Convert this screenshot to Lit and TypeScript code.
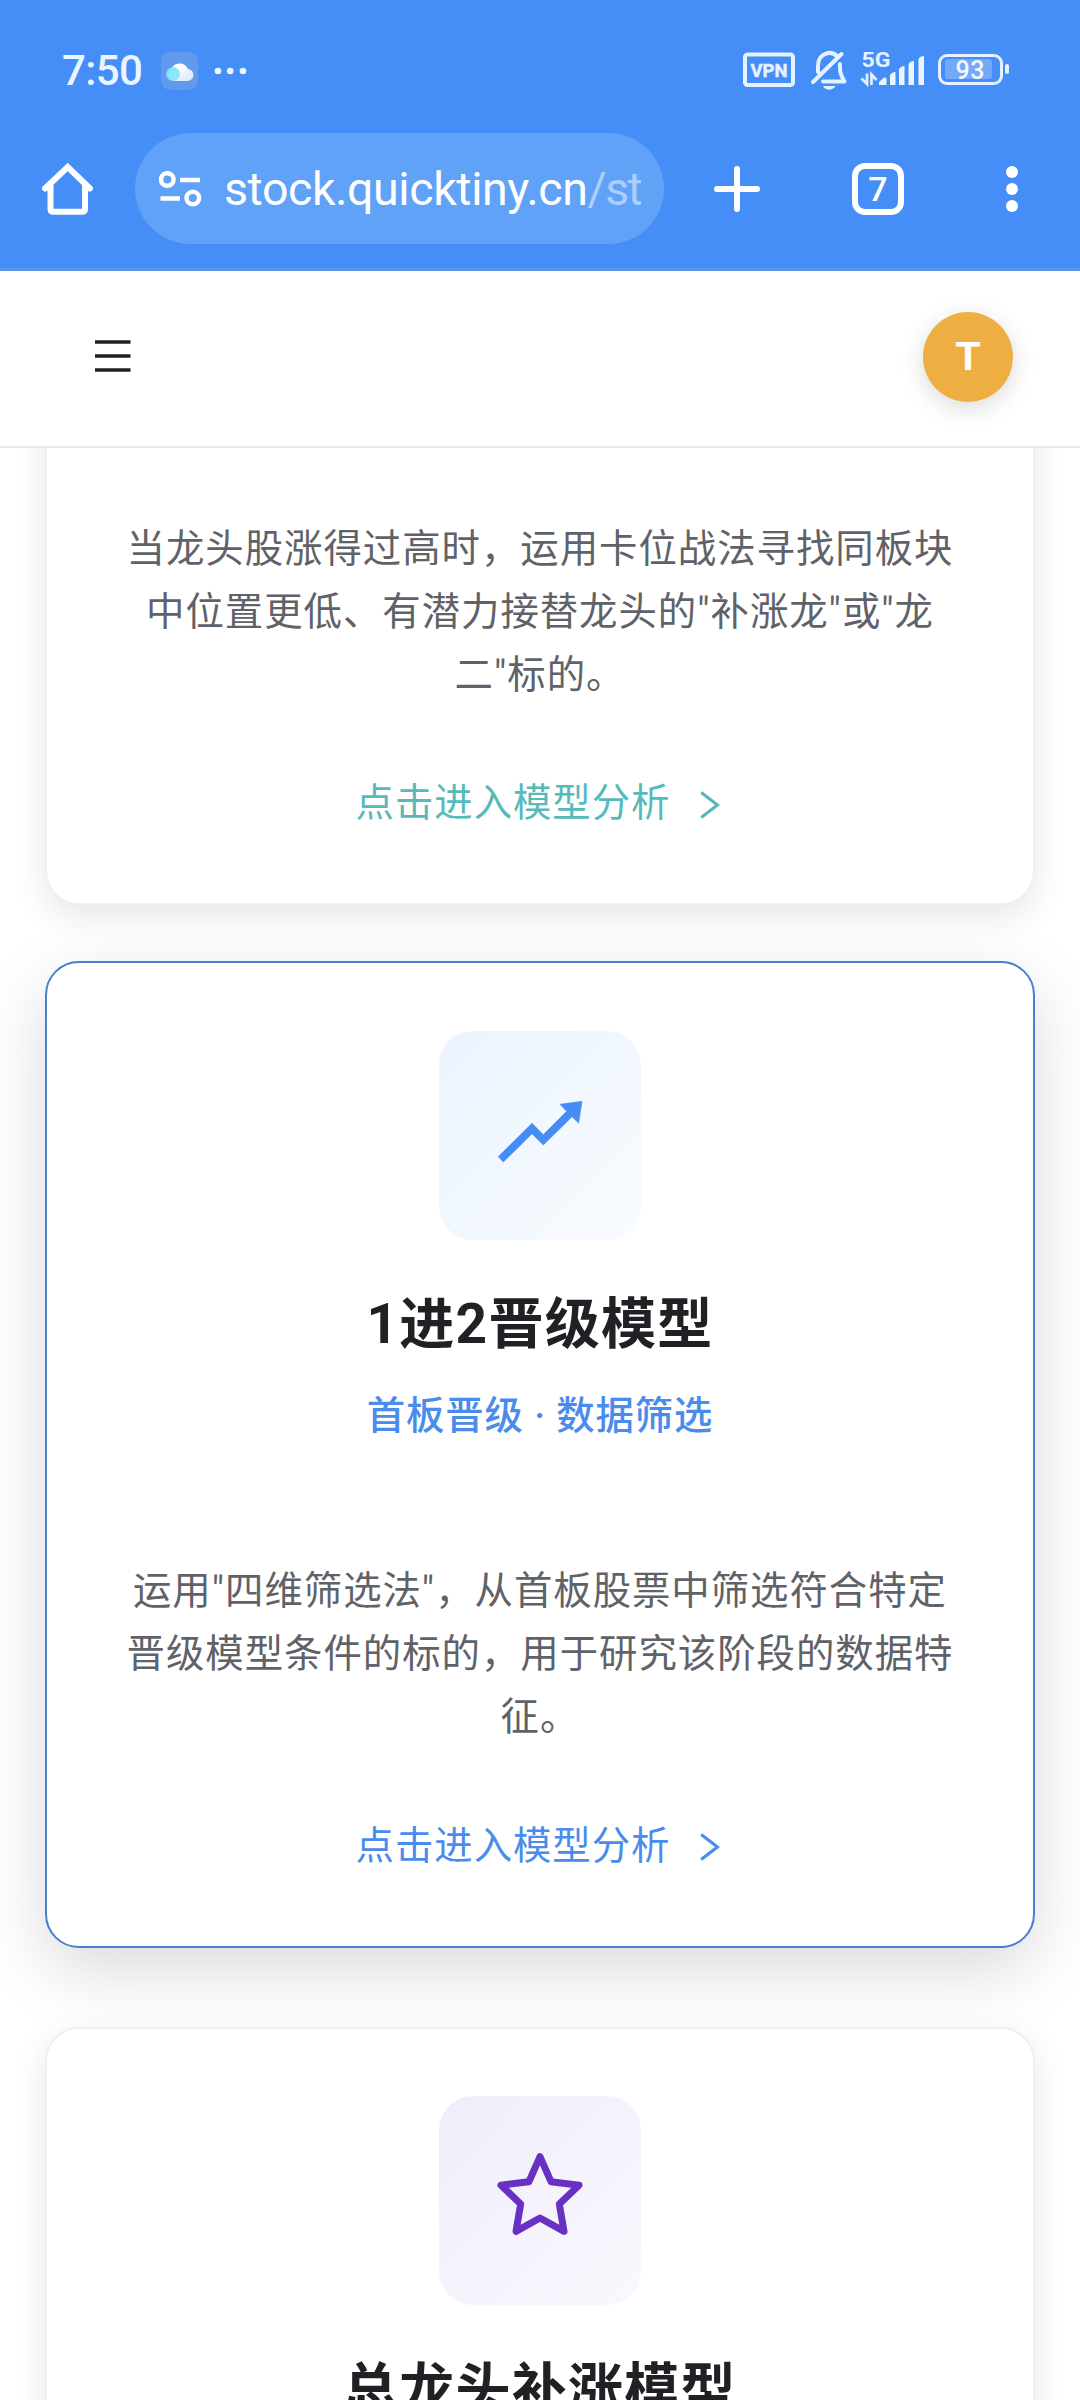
import { LitElement, html, css, svg, nothing } from "lit";
import { customElement, property } from "lit/decorators.js";

const trendIcon = svg`<svg class="glyph" viewBox="0 0 720 780"><path fill="#458df5" stroke="#458df5" stroke-width="2" stroke-linejoin="round" d="M235 470 336 370 370 404 440 334 420 313 486 304 476 369 456 350 370 435 336 401 250 486Z"/></svg>`;
const starIcon = svg`<svg class="glyph" viewBox="0 0 720 780"><path fill="none" stroke="#6831c4" stroke-width="21" stroke-linejoin="round" d="M360 230 393 305 477 315.500 418 372 432 454 360 414 288 454 302 372 243 315.500 327 305Z"/></svg>`;

@customElement("status-bar")
class StatusBar extends LitElement {
  static styles = css`
    :host { display: flex; height: 133px; align-items: flex-start; justify-content: space-between; padding: 0 70px 0 62px; box-sizing: border-box; color: #eef6ff; }
    .left { display: flex; align-items: center; height: 141px; }
    .time { font: 500 42px/50px Roboto, sans-serif; letter-spacing: -0.6px; width: 99px; color: #e9f5ff; }
    .more { margin-left: 14px; }
    .right { display: block; }
    .vpn { font: 700 19px Roboto, sans-serif; }
    .net { font: 700 21px Roboto, sans-serif; }
    .pct { font: 500 25px Roboto, sans-serif; }
  `;
  render() {
    return html`
      <div class="left">
        <span class="time">7:50</span>
        <svg width="37" height="38" viewBox="0 0 37 38">
          <defs><linearGradient id="c" x1="0" y1="0" x2="1" y2="1"><stop offset=".3" stop-color="#fff"/><stop offset="1" stop-color="#d3e3ff"/></linearGradient></defs>
          <rect width="37" height="38" rx="9" fill="#6299ea"/>
          <path d="M13 29a6 6 0 0 1-3-11 9 9 0 0 1 17-1 6 6 0 0 1-1 12Z" fill="url(#c)"/>
          <circle cx="12" cy="22" r="7" fill="#7fe4fb" opacity=".9"/>
        </svg>
        <svg class="more" width="40" height="10" viewBox="0 0 40 10" fill="#eef6ff"><circle cx="6" cy="5" r="3.300"/><circle cx="18.200" cy="5" r="3.300"/><circle cx="31" cy="5" r="3.300"/></svg>
      </div>
      <svg class="right" width="270" height="100" viewBox="740 0 270 100" fill="none" stroke="#e4f2ff">
        <rect x="745" y="54.500" width="48" height="30.500" rx="2.500" stroke-width="4"/>
        <text class="vpn" x="750.500" y="76.500" textLength="37" lengthAdjust="spacingAndGlyphs" fill="#e4f2ff" stroke="#e4f2ff" stroke-width=".5">VPN</text>
        <path stroke-width="4" stroke-linecap="round" stroke-linejoin="round" d="M813 82 841.500 54M818 72V66C818 53 831 50 837 56M840 64V69Q840 74 844.500 81.500H823"/>
        <path fill="#e4f2ff" stroke="none" d="M823 86H835.500Q833 89.800 829 89.800T823 86Z"/>
        <text class="net" x="861.500" y="67" textLength="29" lengthAdjust="spacingAndGlyphs" fill="#e4f2ff" stroke="none">5G</text>
        <path stroke-width="2.700" d="M867 73.500V84L861.500 78.500M871.500 85V74.500L876.500 80"/>
        <g fill="#e9f5ff" stroke="none"><path d="M879 85V82L884 77.500Q886.500 77 886.500 79V85Z"/><path d="M890 85V75Q892 72 895.500 72V85Z"/><path d="M899 85V69Q901 66 904.500 66V85Z"/><path d="M908.500 85V64Q910 61 914 61V85Z"/><path d="M918.500 85V59Q920 56 924 56V85Z"/></g>
        <rect x="939.500" y="55.500" width="62" height="28" rx="7.500" stroke-width="3"/>
        <rect x="945" y="59" width="47" height="20" rx="3" fill="#fff" opacity=".25" stroke="none"/>
        <rect x="1005" y="64" width="4" height="10" rx="2" fill="#e4f2ff" stroke="none"/>
        <text class="pct" x="955.500" y="79" textLength="29" fill="#f2f9ff" stroke="none">93</text>
      </svg>`;
  }
}

@customElement("browser-bar")
class BrowserBar extends LitElement {
  static styles = css`
    :host { display: flex; align-items: center; height: 138px; padding: 0 51px 24px 42px; box-sizing: border-box; border-bottom: 3px solid #5a96e8; }
    svg { display: block; flex: none; }
    .pill { display: flex; align-items: center; box-sizing: border-box; width: 529px; height: 111px; margin-left: 42px; padding: 0 23px 0 24px; border-radius: 56px; background: #60a2f7; }
    .url { width: 417px; margin-left: 22px; overflow: hidden; white-space: nowrap; font: 400 46.5px/60px Roboto, sans-serif; letter-spacing: -0.4px; color: #fff; }
    .path { color: #a9d0fd; letter-spacing: -1.6px; }
    .plus { margin-left: 50px; }
    .tabs { display: flex; align-items: center; justify-content: center; box-sizing: border-box; width: 52px; height: 52px; margin-left: 92px; border: 6px solid #fff; border-radius: 13px; font: 500 34px/40px Roboto, sans-serif; color: #fff; }
    .menu { margin-left: 102px; }
  `;
  render() {
    return html`
      <svg width="51" height="52" viewBox="0 0 51 52" fill="none" stroke="#fff" stroke-width="6" stroke-linecap="round"><path d="M3 25.500 25.700 4 48 25.500M8.500 22V46Q8.500 48.800 11.300 48.800H40Q43 48.800 43 46V22"/></svg>
      <div class="pill">
        <svg width="43" height="36" viewBox="0 0 43 36" fill="none" stroke="#fff" stroke-width="4.500"><circle cx="8.300" cy="8.500" r="6.300"/><path d="M21 9H41M1.500 27.500H21"/><circle cx="33.800" cy="27" r="6.300"/></svg>
        <div class="url">stock.quicktiny.cn<span class="path">/strategy</span></div>
      </div>
      <svg class="plus" width="46" height="46" viewBox="0 0 46 46" stroke="#fff" stroke-width="6" stroke-linecap="round"><path d="M23 3V43M3 23H43"/></svg>
      <div class="tabs">7</div>
      <svg class="menu" width="12" height="46" viewBox="0 0 12 46" fill="#fff"><circle cx="6" cy="6" r="6"/><circle cx="6" cy="23" r="6"/><circle cx="6" cy="40" r="6"/></svg>`;
  }
}

@customElement("model-card")
class ModelCard extends LitElement {
  @property() heading = "";
  @property() sub = "";
  @property() tone = "";
  @property({ attribute: false }) lines: string[] = [];
  static styles = css`
    :host { display: block; }
    .card { display: flex; flex-direction: column; align-items: center; box-sizing: border-box; width: 990px; height: 987.500px; padding-top: 68.500px; border: 2px solid #f0f0f0; border-radius: 34px; background: #fff; box-shadow: 0 11px 34px rgba(0, 0, 0, 0.1); font-family: Roboto, "Noto Sans CJK SC", sans-serif; }
    .teal { height: 516.500px; padding-top: 127px; }
    .blue { border-color: #487fce; box-shadow: 0 22px 68px rgba(0, 0, 0, 0.15); }
    .purple { padding-top: 67px; }
    .badge { width: 202px; height: 208.500px; border-radius: 34px; flex: none; }
    .blue .badge { background: linear-gradient(135deg, #ebf4fe, #f8fbff); }
    .purple .badge { background: linear-gradient(135deg, #f0edfa, #faf8fe); }
    .glyph { display: block; width: 240px; height: 260px; margin: -31px 0 0 -19px; }
    .purple .glyph { margin-top: -16px; }
    .title { margin-top: 52px; font-size: 55px; line-height: 64px; letter-spacing: 1.250px; font-weight: 700; color: #202124; white-space: nowrap; }
    .sub { margin-top: 35px; font-size: 38.400px; line-height: 50px; letter-spacing: 0.850px; font-weight: 500; color: #4a8cec; white-space: nowrap; }
    .desc { font-size: 38.400px; line-height: 63px; letter-spacing: 0.980px; text-align: center; color: #5f6268; white-space: nowrap; }
    .blue .desc { margin-top: 118px; }
    .link { display: flex; align-items: center; margin-top: 76px; padding-right: 4px; gap: 30px; font-size: 38.400px; line-height: 44px; letter-spacing: 0.980px; color: #4a8cec; }
    .teal .link { margin-top: 75px; color: #58b9bb; }
    .link svg { display: block; margin-top: 3px; }
  `;
  render() {
    return html`<div class="card ${this.tone}">
      ${this.tone === "teal" ? nothing : html`<div class="badge">${this.tone === "blue" ? trendIcon : starIcon}</div>`}
      ${this.heading ? html`<div class="title">${this.heading}</div>` : nothing}
      ${this.sub ? html`<div class="sub">${this.sub}</div>` : nothing}
      ${this.lines.length
        ? html`<div class="desc">${this.lines.map((l) => html`<div>${l}</div>`)}</div>
            <div class="link"><span>点击进入模型分析</span><svg width="20" height="28" viewBox="0 0 20 28" fill="none" stroke="currentColor" stroke-width="3.200"><path d="M1.200 1.500 17.500 14 1.200 26.500"/></svg></div>`
        : nothing}
    </div>`;
  }
}

@customElement("app-root")
class AppRoot extends LitElement {
  static styles = css`
    :host { display: flex; flex-direction: column; width: 1080px; height: 2400px; overflow: hidden; background: #fff; }
    .chrome { flex: none; background: #458df7; }
    .header { display: flex; flex: none; align-items: center; justify-content: space-between; box-sizing: border-box; height: 177px; padding: 0 67px 6px 95px; border-bottom: 2px solid #e8e8ed; background: #fff; }
    .header svg { display: block; }
    .avatar { width: 90px; height: 90px; margin-top: 3px; border-radius: 50%; background: #eeae42; box-shadow: 0 6px 23px rgba(0, 0, 0, 0.15); color: #fff; text-align: center; font: 700 41px/89px "Liberation Sans", sans-serif; }
    .main { flex: 1; min-height: 0; overflow: hidden; display: flex; flex-direction: column; align-items: center; }
    .first { margin-top: -60px; }
    .active { margin-top: 56px; }
    .last { margin-top: 79px; }
    model-card { flex: none; }
  `;
  render() {
    return html`
      <div class="chrome"><status-bar></status-bar><browser-bar></browser-bar></div>
      <div class="header">
        <svg width="36" height="32" viewBox="0 0 36 32" stroke="#202020" stroke-width="3.400"><path d="M0 2H35.500M0 16H35.500M0 30H35.500"/></svg>
        <div class="avatar">T</div>
      </div>
      <div class="main">
        <model-card class="first" tone="teal" .lines=${["当龙头股涨得过高时，运用卡位战法寻找同板块", '中位置更低、有潜力接替龙头的"补涨龙"或"龙', '二"标的。']}></model-card>
        <model-card class="active" tone="blue" heading="1进2晋级模型" sub="首板晋级 · 数据筛选" .lines=${['运用"四维筛选法"，从首板股票中筛选符合特定', "晋级模型条件的标的，用于研究该阶段的数据特", "征。"]}></model-card>
        <model-card class="last" tone="purple" heading="总龙头补涨模型"></model-card>
      </div>`;
  }
}
